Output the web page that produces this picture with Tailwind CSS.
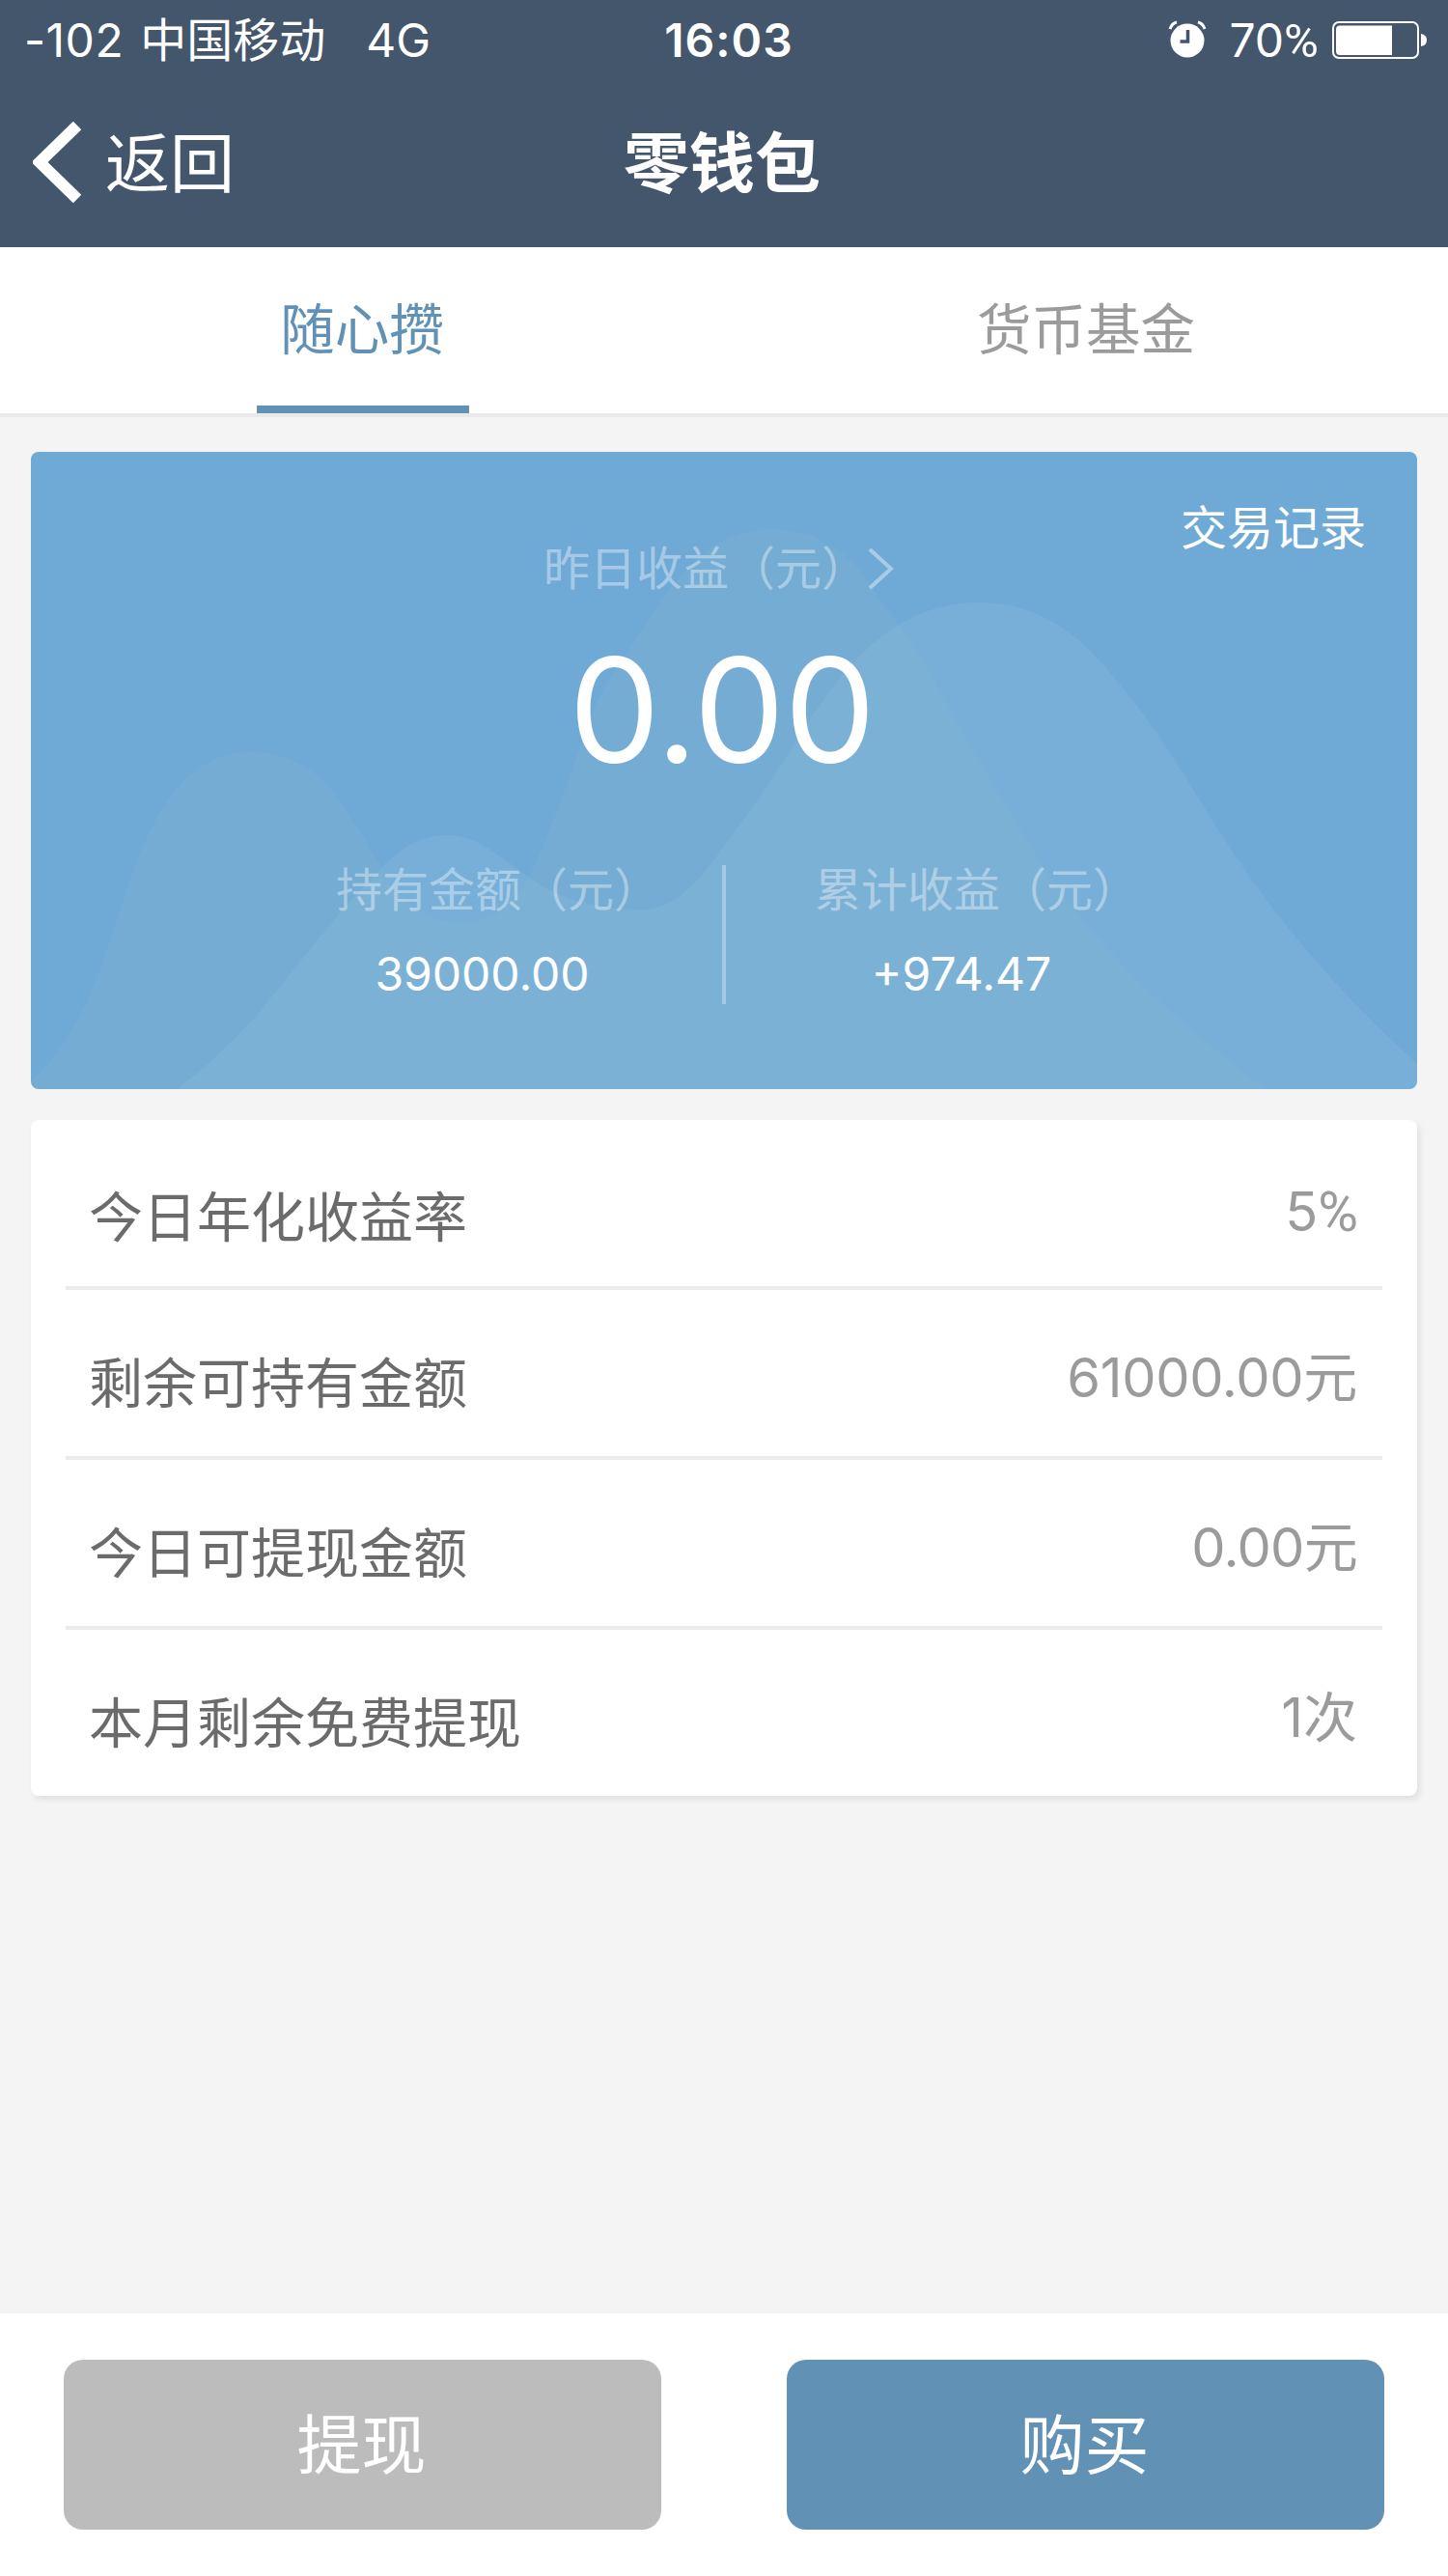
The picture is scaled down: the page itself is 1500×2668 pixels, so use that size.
<!DOCTYPE html>
<html lang="zh-CN">
  <head>
    <meta charset="UTF-8" />
    <meta name="viewport" content="width=device-width, initial-scale=1.0" />
    <title>零钱包</title>
    <script src="https://cdn.jsdelivr.net/npm/@tailwindcss/browser@4"></script>
  </head>
  <body class="bg-[#f4f4f4]">
    <div class="flex flex-col w-[1500px] h-[2668px] overflow-hidden font-['Inter','Noto_Sans_CJK_SC',sans-serif]">
      <header class="h-64 shrink-0 bg-[#44566c] text-white">
        <!-- Status bar -->
        <div class="grid grid-cols-3 items-center h-[82px] pl-[25px] pr-[21px] text-[48px] leading-none whitespace-nowrap">
          <div class="flex items-center pt-0.5">
            <span class="tracking-[0.5px]">-102</span>
            <span class="ml-[17px]">中国移动</span>
            <span class="ml-[42px]">4G</span>
          </div>
          <div class="pt-0.5 text-center pl-1.5 font-semibold tracking-[1px]">16:03</div>
          <div class="flex items-center justify-end">
            <svg class="w-10 h-10" viewBox="0 0 40 40" fill="none">
              <circle cx="20" cy="21" r="17.5" fill="#fff" />
              <path d="M2 9 Q4 3 9 2M38 9 Q36 3 31 2" stroke="#fff" stroke-width="3" />
              <path d="M20.5 10 V22 H12.5" stroke="#44566c" stroke-width="3.5" />
            </svg>
            <span class="ml-[23px] pt-0.5">70<span class="font-['Roboto'] text-[49px]">%</span></span>
            <svg class="ml-3.5 w-[99px] h-10" viewBox="0 0 99 40" fill="none">
              <rect x="1" y="2" width="88" height="37" rx="6" stroke="#fff" stroke-width="2" />
              <path d="M8 5.5 H62 V36 H8 Q4 36 4 32 V9.5 Q4 5.5 8 5.5Z" fill="#fff" />
              <path d="M92 14 Q98 15 98 20.5 Q98 26 92 27Z" fill="#fff" />
            </svg>
          </div>
        </div>
        <!-- Navigation bar -->
        <div class="grid grid-cols-3 items-center h-[172px] px-[34px] leading-none">
          <div class="flex items-center">
            <svg class="w-[50px] h-[84px]" viewBox="0 0 50 84" fill="none">
              <path d="M46 4 L7 42 L46 80" stroke="#fff" stroke-width="12" />
            </svg>
            <span class="ml-[25px] pt-0.5 text-[67px]">返回</span>
          </div>
          <h1 class="-ml-1 pt-0.5 text-center text-[68px] font-bold">零钱包</h1>
        </div>
      </header>

      <!-- Tabs -->
      <nav class="grid grid-cols-2 h-44 shrink-0 bg-white border-b-4 border-[#e9e9e9] text-[56.5px] leading-[171px] text-center">
        <div class="flex justify-center pl-0.5">
          <div class="w-[220px] h-[172px] pr-0.5 border-b-8 border-[#6191b5] text-[#6191b5]">随心攒</div>
        </div>
        <div class="text-[#9b9b9b]">货币基金</div>
      </nav>

      <main class="grow px-8 pt-9">
        <!-- Earnings card -->
        <section class="relative h-[660px] rounded-lg overflow-hidden bg-[#6faad7] text-white">
          <svg class="absolute inset-0 w-full h-full" viewBox="32 468 1436 660">
            <path
              d="M32 1120 C70 1085 92 1042 115 972 C145 875 178 779 258 779 C325 779 350 820 392 894 C415 935 440 956 478 956 C515 956 535 935 550 904 C600 800 600 740 655 668 C689 618 725 548 798 548 C850 548 885 575 908 616 C941 659 965 695 980 729 C1015 790 1045 840 1080 898 C1140 985 1215 1055 1310 1128 H32Z"
              fill="#8ab5cf"
              fill-opacity="0.22"
            />
            <path
              d="M184 1128 C220 1100 260 1060 278 1037 C320 985 350 945 392 902 C415 878 435 865 464 865 C500 865 530 899 565 920 C600 938 635 942 670 942 C705 938 730 905 750 876 C785 830 805 800 827 764 C860 712 915 624 1013 624 C1085 624 1125 665 1166 716 C1210 770 1245 835 1276 881 C1335 970 1400 1040 1468 1102 V1128Z"
              fill="#a2c8e2"
              fill-opacity="0.18"
            />
          </svg>
          <div class="relative h-full pt-[55px]">
            <div class="h-12 pr-[53px] text-right text-[48px] leading-[48px]">交易记录</div>
            <div class="flex items-center pl-[531px] -mt-1.5 h-12 text-[48px] leading-[48px] text-white/40">
              <span>昨日收益（元）</span>
              <svg class="w-[27px] h-[44px]" viewBox="0 0 27 44" fill="none">
                <path d="M2 2 L24 22 L2 42" stroke="currentColor" stroke-width="4" />
              </svg>
            </div>
            <div class="mt-[47px] pr-1 text-center text-[150px] leading-[152px] tracking-[-0.5px]">0.00</div>
            <div class="flex mt-[84px] text-[48px] leading-[48px]">
              <div class="w-[716px] pl-[316px]">
                <div class="w-[336px] pt-0.5 text-white/40 whitespace-nowrap">持有金额（元）</div>
                <div class="w-[303px] mt-[39px] text-center">39000.00</div>
              </div>
              <div class="w-1 h-36 bg-white/30"></div>
              <div class="pl-[92px]">
                <div class="w-[336px] pt-0.5 text-white/40 whitespace-nowrap">累计收益（元）</div>
                <div class="w-[304px] mt-[39px] text-center">+974.47</div>
              </div>
            </div>
          </div>
        </section>

        <!-- Account details -->
        <section class="mt-8 h-[700px] px-9 rounded-lg bg-white shadow-[3px_4px_6px_rgba(0,0,0,0.08)] text-[56px] leading-none text-[#6b6b6b]">
          <div class="flex items-center justify-between h-44 pl-6 pr-[25px] border-b-4 border-[#ebebeb]">
            <span class="pt-[30px]">今日年化收益率</span>
            <span class="pt-[18px] text-[#9b9b9b]">5<span class="font-['Roboto'] text-[57px]">%</span></span>
          </div>
          <div class="flex items-center justify-between h-44 pl-6 pr-[26px] border-b-4 border-[#ebebeb]">
            <span class="pt-[22px]">剩余可持有金额</span>
            <span class="pt-2.5 tracking-[-0.3px] text-[#9b9b9b]">61000.00元</span>
          </div>
          <div class="flex items-center justify-between h-44 pl-6 pr-[26px] border-b-4 border-[#ebebeb]">
            <span class="pt-[22px]">今日可提现金额</span>
            <span class="pt-2.5 tracking-[-0.7px] text-[#9b9b9b]">0.00元</span>
          </div>
          <div class="flex items-center justify-between h-[172px] pl-6 pr-[26px]">
            <span class="pt-[22px]">本月剩余免费提现</span>
            <span class="pt-2.5 text-[#9b9b9b]">1次</span>
          </div>
        </section>
      </main>

      <!-- Actions -->
      <footer class="flex gap-[130px] h-[272px] shrink-0 pt-12 px-[66px] bg-white text-[67px] text-white">
        <button type="button" class="w-[620px] h-44 pt-0.5 pr-0.5 rounded-[20px] bg-[#bcbcbc]">提现</button>
        <button type="button" class="w-[620px] h-44 pt-0.5 pr-0.5 rounded-[20px] bg-[#6191b5]">购买</button>
      </footer>
    </div>
  </body>
</html>
